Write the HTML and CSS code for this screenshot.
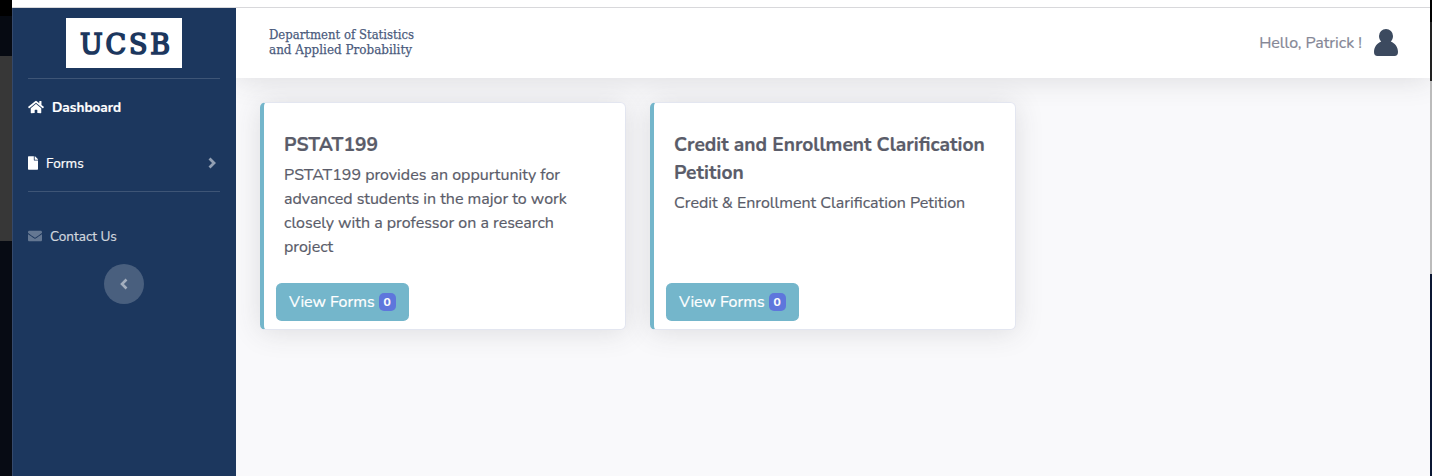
FILE: index.html
```
<!DOCTYPE html>
<html lang="en">
<head>
    <meta charset="UTF-8">
    <meta name="viewport" content="width=device-width, initial-scale=1.0">
    <title>PSTAT Forms</title>
    <link rel="stylesheet" href="styles.css">
</head>
<body>
    <div class="edge edge-left"></div>
    <div class="window">
        <div class="window-top"></div>
        <div id="wrapper">
            <nav class="sidebar">
                <a class="sidebar-brand" href="#">
                    <svg width="116" height="50" viewBox="0 0 116 50">
                        <rect width="116" height="50" fill="#fff"/>
                        <text x="14" y="35.500" textLength="93" lengthAdjust="spacingAndGlyphs">UCSB</text>
                    </svg>
                </a>
                <hr>
                <a class="nav-link active" href="#">
                    <svg width="16" height="14" viewBox="0 0 576 512"><path fill="currentColor" d="M280 148L96 300v164a16 16 0 0 0 16 16l112-1a16 16 0 0 0 16-16v-95a16 16 0 0 1 16-16h64a16 16 0 0 1 16 16v95a16 16 0 0 0 16 16l112 1a16 16 0 0 0 16-16V300L296 148a12 12 0 0 0-16 0zM572 251l-84-69V44a12 12 0 0 0-12-12h-56a12 12 0 0 0-12 12v72l-90-74a48 48 0 0 0-61 0L4 251a12 12 0 0 0-2 17l26 31a12 12 0 0 0 17 2L280 107a12 12 0 0 1 16 0l235 194a12 12 0 0 0 17-2l26-31a12 12 0 0 0-2-17z"/></svg>
                    <span>Dashboard</span>
                </a>
                <a class="nav-link" href="#">
                    <svg width="10" height="14" viewBox="0 0 384 512"><path fill="currentColor" d="M224 136V0H24C11 0 0 11 0 24v464c0 13 11 24 24 24h336c13 0 24-11 24-24V160H248c-13 0-24-11-24-24zm160-14v6H256V0h6c6 0 12 3 17 7l98 98c4 5 7 11 7 17z"/></svg>
                    <span>Forms</span>
                    <svg class="arrow" width="8" height="12" viewBox="0 0 8 12"><path d="M1.500 1.500L6 6l-4.500 4.500" fill="none" stroke="currentColor" stroke-width="2.800"/></svg>
                </a>
                <hr>
                <a class="nav-link contact" href="#">
                    <svg width="14" height="14" viewBox="0 0 512 512"><path fill="currentColor" d="M502 191c4-3 10 0 10 5v204c0 27-21 48-48 48H48c-27 0-48-21-48-48V196c0-5 6-8 10-5 22 17 52 40 155 114 21 15 57 48 91 48 34 0 71-33 91-48 103-74 133-97 155-114zM256 320c23 0 57-29 74-42 134-97 144-105 175-129 5-5 7-12 7-19v-18c0-27-21-48-48-48H48c-27 0-48 21-48 48v18c0 7 3 14 9 19 31 24 41 32 175 129 17 13 51 42 74 42z"/></svg>
                    <span>Contact Us</span>
                </a>
                <button class="sidebar-toggle">
                    <svg width="8" height="12" viewBox="0 0 8 12"><path d="M6.500 1.500L2 6l4.500 4.500" fill="none" stroke="currentColor" stroke-width="2.600"/></svg>
                </button>
            </nav>
            <div class="content">
                <header class="topbar">
                    <svg class="dept" width="160" height="36" viewBox="0 0 160 36">
                        <text x="1" y="14" textLength="145" lengthAdjust="spacingAndGlyphs">Department of Statistics</text>
                        <text x="1" y="29" textLength="143" lengthAdjust="spacingAndGlyphs">and Applied Probability</text>
                    </svg>
                    <div class="user">
                        <span>Hello, Patrick !</span>
                        <svg width="24" height="27" viewBox="0 0 24 27"><path fill="#3c4a5f" d="M12 0a7 7 0 0 1 7 7c0 2.500-1 4.300-2.200 5.400C21 14 24 18 24 23c0 2.500-1.200 4-3.500 4h-17C1.200 27 0 25.500 0 23c0-5 3-9 7.200-10.600C6 11.300 5 9.500 5 7a7 7 0 0 1 7-7z"/></svg>
                    </div>
                </header>
                <main class="cards">
                    <div class="card">
                        <div class="card-body">
                            <h5>PSTAT199</h5>
                            <p>PSTAT199 provides an oppurtunity for advanced students in the major to work closely with a professor on a research project</p>
                        </div>
                        <a class="btn" href="#">View Forms <span class="badge">0</span></a>
                    </div>
                    <div class="card">
                        <div class="card-body">
                            <h5>Credit and Enrollment Clarification Petition</h5>
                            <p>Credit &amp; Enrollment Clarification Petition</p>
                        </div>
                        <a class="btn" href="#">View Forms <span class="badge">0</span></a>
                    </div>
                </main>
            </div>
        </div>
    </div>
    <div class="edge edge-right"></div>
</body>
</html>
```
FILE: styles.css
```
* { box-sizing: border-box; }

body {
    margin: 0;
    height: 476px;
    display: flex;
    overflow: hidden;
    font-family: Nunito, Lato, sans-serif;
    font-size: 16px;
    line-height: 24px;
    color: #5a5c69;
    background: #070b14;
    -webkit-text-stroke: .2px;
}

a { text-decoration: none; color: inherit; }

.edge-left {
    width: 12px;
    background: linear-gradient(#000 16px, #060a12 16px 56px, #373737 56px 241px, #070b14 241px);
}
.edge-right {
    width: 2px;
    background: linear-gradient(#000 22px, #222 22px 81px, #bbb 81px 274px, #0b1733 274px);
}

.window {
    flex: 1;
    display: flex;
    flex-direction: column;
}
.window-top {
    height: 8px;
    background: #fff;
    border-bottom: 1px solid #d8d8db;
}

#wrapper {
    flex: 1;
    display: flex;
    background: #f9f9fb;
}

/* Sidebar */
.sidebar {
    width: 224px;
    display: flex;
    flex-direction: column;
    background: #1c375e;
    box-shadow: inset 1px 0 #35496b;
    font-size: 13.6px;
    color: #fff;
}
.sidebar-brand {
    height: 70px;
    display: flex;
    align-items: center;
    justify-content: center;
}
.sidebar-brand text {
    font: 28px "DejaVu Serif", serif;
    letter-spacing: 3px;
    fill: #1c375e;
    stroke: #1c375e;
    stroke-width: 1.7px;
}
.sidebar hr {
    width: 192px;
    height: 1px;
    margin: 0 16px;
    border: 0;
    background: #3e5576;
}
.nav-link {
    height: 56px;
    padding: 0 20px 0 16px;
    display: flex;
    align-items: center;
    gap: 8px;
}
.nav-link span { padding-top: 2px; }
.nav-link.active { font-weight: 700; }
.nav-link .arrow { margin-left: auto; color: #929fb3; }
.nav-link.contact { margin-top: 16px; color: #d2d7df; }
.nav-link.contact svg { color: #647792; }

.sidebar-toggle {
    width: 40px;
    height: 40px;
    padding: 0 1px 0 0;
    align-self: center;
    display: flex;
    align-items: center;
    justify-content: center;
    border: 0;
    border-radius: 50%;
    background: #495f7e;
    color: #a4afbf;
}

/* Content */
.content {
    flex: 1;
    overflow: hidden;
}
.topbar {
    height: 70px;
    padding: 0 32px;
    display: flex;
    align-items: center;
    justify-content: space-between;
    background: #fff;
    box-shadow: 0 2px 28px rgba(58, 59, 69, .15);
}
.dept { overflow: visible; }
.dept text {
    font: 13.5px "DejaVu Serif", serif;
    fill: #4a5a7c;
    stroke: #4a5a7c;
    stroke-width: .25px;
}
.user {
    display: flex;
    align-items: center;
    gap: 12px;
    color: #858796;
}
.user svg { margin-bottom: 1px; }

.cards {
    padding: 24px;
    display: flex;
    gap: 24px;
}
.card {
    width: 366px;
    height: 228px;
    padding: 0 12px 8px;
    display: flex;
    flex-direction: column;
    justify-content: space-between;
    align-items: flex-start;
    background: #fff;
    border: 1px solid #e3e6f0;
    border-left: 4px solid #74b6cb;
    border-radius: 5.6px;
    box-shadow: 0 2px 28px rgba(58, 59, 69, .15);
}
.card-body { padding: 28px 8px 0; }
.card h5 {
    margin: 0 0 4px;
    font-size: 19.2px;
    line-height: 28px;
    font-weight: 700;
}
.card p { margin: 0; }

.btn {
    height: 38px;
    padding: 0 13px;
    display: flex;
    align-items: center;
    gap: 4px;
    border-radius: 5.6px;
    background: #74b6cb;
    color: #fff;
}
.badge {
    width: 17px;
    height: 18px;
    border-radius: 5px;
    background: #5e76dc;
    font-size: 12px;
    line-height: 18px;
    font-weight: 700;
    text-align: center;
}
```
